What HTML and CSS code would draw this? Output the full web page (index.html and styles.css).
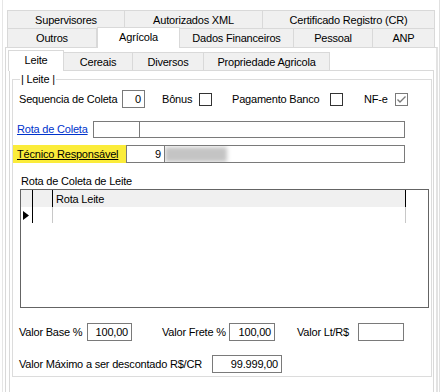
FILE: index.html
```html
<!DOCTYPE html>
<html lang="pt-BR">
<head>
    <meta charset="UTF-8">
    <title>Agrícola</title>
    <link rel="stylesheet" href="styles.css">
</head>
<body>
    <div class="window">
        <div class="tabs-outer">
            <div class="tabrow">
                <div class="tab" style="width:118px">Supervisores</div>
                <div class="tab" style="width:138px">Autorizados XML</div>
                <div class="tab" style="width:172px">Certificado Registro (CR)</div>
            </div>
            <div class="tabrow second">
                <div class="tab" style="width:90px">Outros</div>
                <div class="tab active" style="width:83px">Agrícola</div>
                <div class="tab" style="width:114px">Dados Financeiros</div>
                <div class="tab" style="width:79px">Pessoal</div>
                <div class="tab" style="width:62px">ANP</div>
            </div>
        </div>

        <div class="panel-outer">
            <div class="tabs-inner">
                <div class="tab active" style="width:56px">Leite</div>
                <div class="tab" style="width:69px">Cereais</div>
                <div class="tab" style="width:71px">Diversos</div>
                <div class="tab" style="width:126px">Propriedade Agricola</div>
            </div>

            <div class="panel-inner">
                <div class="group">
                    <span class="legend">| Leite |</span>

                    <div class="row row-seq">
                        <span class="lbl" style="width:103px">Sequencia de Coleta</span>
                        <span class="input" style="width:23px">0</span>
                        <span class="lbl" style="width:37px;margin-left:17px">Bônus</span>
                        <span class="check"></span>
                        <span class="lbl" style="width:98px;margin-left:20px">Pagamento Banco</span>
                        <span class="check"></span>
                        <span class="lbl" style="width:31px;margin-left:21px">NF-e</span>
                        <span class="check checked">
                            <svg width="11" height="11" viewBox="0 0 11 11"><path d="M1.5 5.5 L4 8 L9.5 2.5" fill="none" stroke="#7a7a7a" stroke-width="1.4"/></svg>
                        </span>
                    </div>

                    <div class="row row-rota">
                        <a class="link" href="#">Rota de Coleta</a>
                        <span class="input" style="width:47px"></span>
                        <span class="input joined" style="width:265px"></span>
                    </div>

                    <div class="row row-tec">
                        <span class="highlight"><span class="link dark">Técnico Responsável</span></span>
                        <span class="input" style="width:39px">9</span>
                        <span class="input joined name" style="width:240px"><span class="blur"></span></span>
                    </div>

                    <div class="caption">Rota de Coleta de Leite</div>
                    <div class="grid">
                        <div class="grid-head">
                            <span class="gc ind"></span>
                            <span class="gc c2"></span>
                            <span class="gc c3">Rota Leite</span>
                        </div>
                        <div class="grid-row">
                            <span class="gc ind"><svg width="6" height="9" viewBox="0 0 6 9"><path d="M0 0 L6 4.5 L0 9 Z" fill="#000"/></svg></span>
                            <span class="gc c2"></span>
                            <span class="gc c3"></span>
                        </div>
                    </div>

                    <div class="row row-valor">
                        <span class="lbl" style="width:68px">Valor Base %</span>
                        <span class="input" style="width:45px">100,00</span>
                        <span class="lbl" style="width:67px;margin-left:30px">Valor Frete %</span>
                        <span class="input" style="width:46px">100,00</span>
                        <span class="lbl" style="width:61px;margin-left:22px">Valor Lt/R$</span>
                        <span class="input" style="width:46px"></span>
                    </div>

                    <div class="row row-max">
                        <span class="lbl" style="width:193px">Valor Máximo a ser descontado R$/CR</span>
                        <span class="input" style="width:70px">99.999,00</span>
                    </div>
                </div>
            </div>
        </div>
    </div>
</body>
</html>
```

FILE: styles.css
```css
* {
    box-sizing: border-box;
}
body {
    margin: 0;
    background: #fff;
    font-family: "Liberation Sans", Arial, sans-serif;
    font-size: 11px;
    letter-spacing: -0.2px;
    color: #000;
}
.window {
    height: 392px;
    overflow: hidden;
    padding-top: 10px;
    margin-left: 2px;
    width: 438px;
    border-left: 1px solid #e6e6e6;
    border-right: 1px solid #e0e0e0;
}
.tabs-outer {
    margin-left: 4px;
}
.tabrow {
    display: flex;
    height: 18px;
}
.tabrow.second {
    height: 19px;
}
.tab {
    background: #f0f0f0;
    border: 1px solid #d9d9d9;
    border-left: none;
    border-bottom: none;
    display: flex;
    align-items: center;
    justify-content: center;
    white-space: nowrap;
}
.tabrow .tab:first-child {
    border-left: 1px solid #d9d9d9;
}
.tabrow.second .tab {
    height: 19px;
}
.tab.active {
    background: #fff;
    border: 1px solid #d9d9d9;
    border-bottom: none;
    position: relative;
    z-index: 1;
    padding-bottom: 2px;
}
.tabrow.second .tab.active {
    height: 21px;
    margin-top: -1px;
    margin-bottom: -1px;
}
.panel-outer {
    margin-left: 2px;
    width: 433px;
    height: 400px;
    border: 1px solid #d9d9d9;
    border-right: 2px solid #e3e3e3;
}
.tabs-inner {
    display: flex;
    align-items: flex-end;
    height: 22px;
    padding-left: 2px;
}
.tabs-inner .tab {
    height: 18px;
}
.tabs-inner .tab:first-child {
    border-left: 1px solid #d9d9d9;
}
.tabs-inner .tab.active {
    height: 21px;
    margin-bottom: -1px;
}
.panel-inner {
    margin-left: 3px;
    width: 425px;
    height: 340px;
    border: 1px solid #d9d9d9;
    padding: 8px 1px 0 2px;
}
.group {
    position: relative;
    height: 298px;
    border: 1px solid #dcdcdc;
    padding-top: 10px;
}
.legend {
    position: absolute;
    top: -7px;
    left: 7px;
    background: #fff;
    padding: 0 1px;
    line-height: 13px;
}
.row {
    display: flex;
    align-items: center;
    height: 18px;
}
.lbl {
    white-space: nowrap;
}
.input {
    height: 18px;
    border: 1px solid #7a7a7a;
    background: #fff;
    display: flex;
    align-items: center;
    justify-content: flex-end;
    padding-right: 3px;
}
.input.joined {
    border-left: none;
}
.row-seq {
    padding-left: 6px;
}
.check {
    width: 13px;
    height: 13px;
    border: 1px solid #333;
    background: #fff;
    display: flex;
    align-items: center;
    justify-content: center;
}
.check.checked {
    border-color: #7a7a7a;
}
.row-rota {
    margin-top: 12px;
    padding-left: 4px;
}
.row-rota .input {
    height: 17px;
}
.link {
    color: #0033cc;
    text-decoration: underline;
    width: 76px;
    white-space: nowrap;
}
.link.dark {
    color: #000;
    width: auto;
}
.row-tec {
    margin-top: 7px;
}
.highlight {
    width: 113px;
    height: 18px;
    background: #fbec3a;
    padding-left: 4px;
    display: flex;
    align-items: center;
    white-space: nowrap;
}
.name {
    justify-content: flex-start;
    overflow: hidden;
    padding-left: 0;
}
.blur {
    width: 62px;
    height: 15px;
    background: #c4c4c4;
    filter: blur(2px);
}
.caption {
    margin-top: 12px;
    padding-left: 8px;
    line-height: 13px;
}
.grid {
    margin-top: 1px;
    margin-left: 7px;
    width: 409px;
    height: 119px;
    border: 1px solid #646464;
}
.grid-head, .grid-row {
    display: flex;
}
.grid-head {
    height: 17px;
    background: #f0f0f0;
    width: 385px;
}
.grid-row {
    height: 16px;
    width: 385px;
}
.gc {
    display: flex;
    align-items: center;
}
.gc.ind {
    width: 12px;
    border-right: 1px solid #000;
    padding-left: 2px;
}
.gc.c2 {
    width: 20px;
    border-right: 1px solid #000;
}
.gc.c3 {
    flex: 1;
    border-right: 1px solid #000;
    padding-left: 3px;
}
.grid-row .gc.c2, .grid-row .gc.c3 {
    border-right-color: #c8c8c8;
}
.row-valor {
    margin-top: 15px;
    padding-left: 6px;
}
.row-max {
    margin-top: 14px;
    padding-left: 6px;
}
```
